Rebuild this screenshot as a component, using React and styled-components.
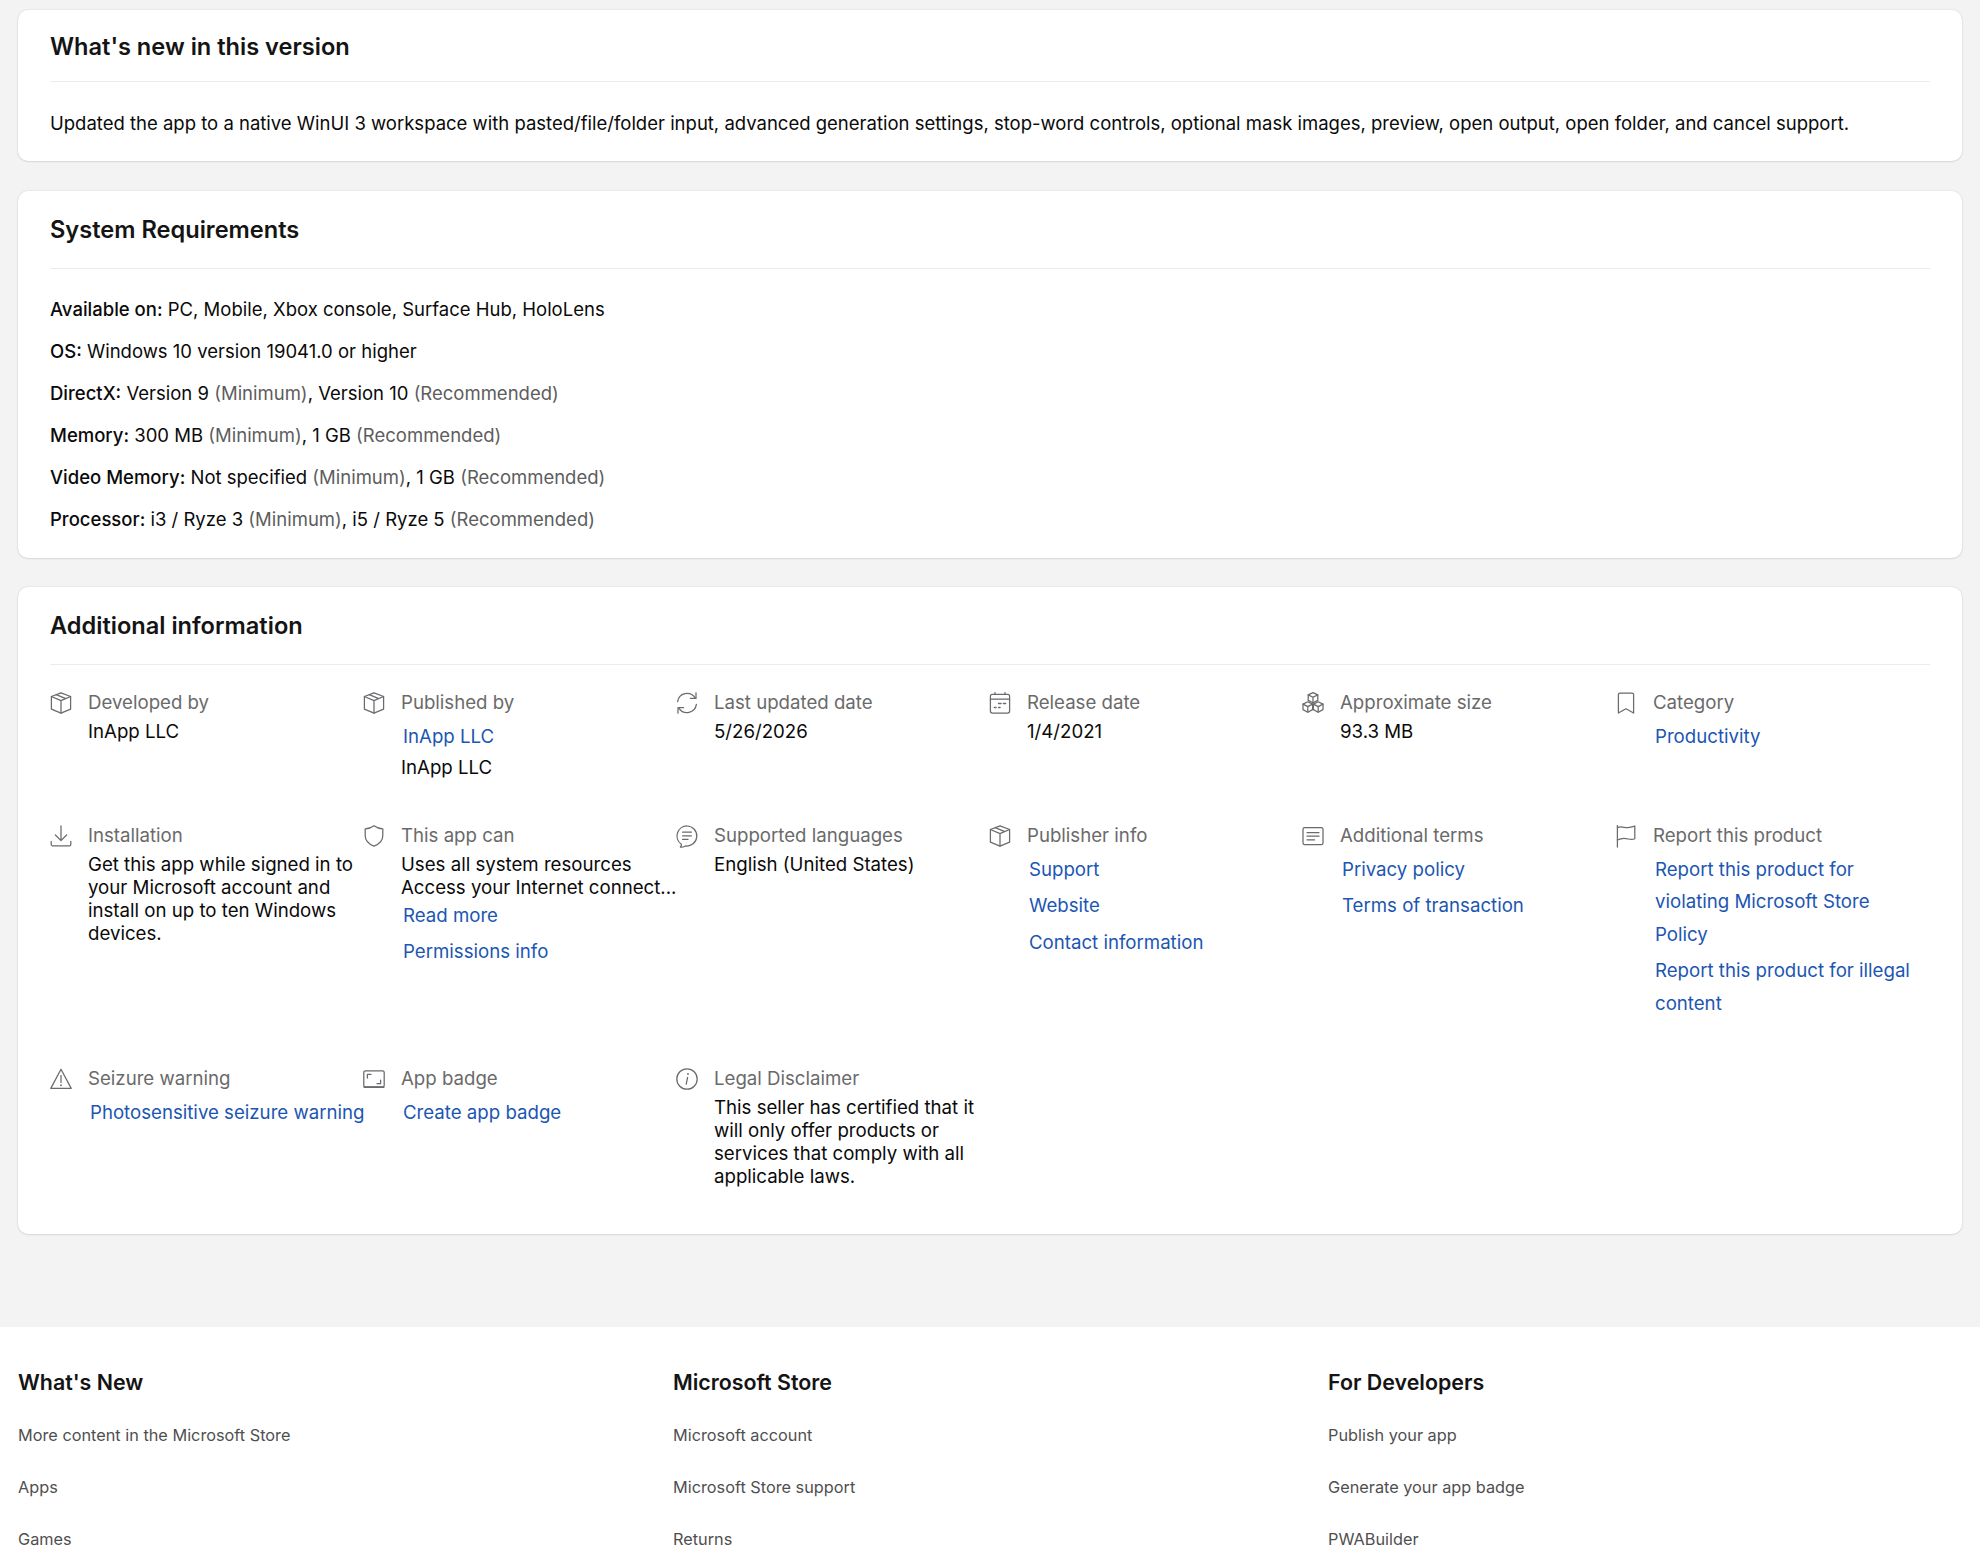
import React from 'react';
import styled, { createGlobalStyle } from 'styled-components';

const GlobalStyle = createGlobalStyle`
  html, body {
    margin: 0;
    padding: 0;
    height: 100%;
    overflow: hidden;
    background: #f3f3f3;
  }
  body {
    font-family: Inter, "Liberation Sans", sans-serif;
    color: #0a0a0a;
  }
`;

const Page = styled.div`
  display: flex;
  flex-direction: column;
  height: 1557px;
  overflow: hidden;
  background: #f3f3f3;
`;

const Main = styled.main`
  display: flex;
  flex-direction: column;
  gap: 29.5px;
  padding: 10px 18px 93px;
`;

const Card = styled.section`
  background: #fff;
  border-radius: 10px;
  padding: 0 32px;
  box-shadow: 0 0 2px rgba(0, 0, 0, 0.14), 0 1px 2px rgba(0, 0, 0, 0.08);
`;

const CardHeader = styled.div`
  display: flex;
  align-items: center;
  box-sizing: border-box;
  height: ${(p) => p.$height}px;
  padding-top: ${(p) => p.$nudge || 0}px;
  border-bottom: 1px solid #ececec;
`;

const Title = styled.h2`
  margin: 0;
  font-size: 23.6px;
  line-height: 32px;
  font-weight: 600;
  color: #141414;
`;

const Notes = styled.p`
  margin: 0;
  padding: 30px 0 26px;
  font-size: 18.5px;
  line-height: 23px;
`;

const ReqList = styled.div`
  padding: 19px 0 18px;
`;

const ReqRow = styled.div`
  font-size: 18.5px;
  line-height: 42px;
`;

const ReqKey = styled.span`
  font-weight: 500;
`;

const Muted = styled.span`
  color: #5d5d5d;
`;

const InfoGrid = styled.div`
  display: grid;
  grid-template-columns: repeat(6, 313px);
  row-gap: 48px;
  padding: 26px 0 45.5px;
`;

const InfoItem = styled.div`
  display: flex;
  align-items: flex-start;
`;

const IconSlot = styled.div`
  flex: none;
  width: 24px;
  height: 24px;
  margin-right: 15px;
  margin-left: -1px;
  color: #6a6a6f;

  svg {
    display: block;
    width: 24px;
    height: 24px;
    fill: none;
    stroke: currentColor;
    stroke-width: 1.25;
    stroke-linejoin: round;
    stroke-linecap: round;
  }
`;

const InfoBody = styled.div`
  flex: 1;
  min-width: 0;
  font-size: 18.65px;
  line-height: 23px;
`;

const Label = styled.div`
  margin-bottom: 6px;
  color: #6a6a6a;
`;

const Links = styled.div`
  display: flex;
  flex-direction: column;
  gap: 4px;
  padding-left: 2px;
  max-width: ${(p) => (p.$narrow ? '262px' : 'none')};
  white-space: ${(p) => (p.$nowrap ? 'nowrap' : 'normal')};
`;

const InfoLink = styled.a`
  color: #1b56b3;
  line-height: 32.5px;
  text-decoration: none;
`;

const AfterLinks = styled.div`
  margin: 3.5px 0 -3.5px;
`;

const ClampLine = styled.div`
  white-space: nowrap;
`;

const TightLink = styled(InfoLink)`
  display: block;
  margin-left: 2px;
`;

const SecondLink = styled(TightLink)`
  margin-top: 3.5px;
`;

const Footer = styled.footer`
  flex: 1;
  display: grid;
  grid-template-columns: repeat(3, 634px);
  column-gap: 21px;
  padding: 41px 18px 0;
  background: #fff;
`;

const FooterTitle = styled.h3`
  margin: 0 0 29px;
  font-size: 21.4px;
  line-height: 28px;
  font-weight: 600;
  color: #141414;
`;

const FooterLink = styled.a`
  display: block;
  font-size: 16.3px;
  line-height: 20px;
  margin-bottom: 32px;
  color: #4f4f4f;
  text-decoration: none;
`;

const BoxIcon = () => (
  <svg viewBox="0 0 24 24">
    <path d="M12 1.8 21.6 5.5V18.2L12 22.2 2.4 18.2V5.5Z" />
    <path d="M2.4 5.5 12 9.6 21.6 5.5M12 9.6V22.2M7.2 3.7 16.8 7.6" />
  </svg>
);

const RefreshIcon = () => (
  <svg viewBox="0 0 24 24">
    <path d="M2.6 10.6A9.6 9.6 0 0 1 20 6.6" />
    <path d="M21 1.8V7.4H15.4" />
    <path d="M21.4 13.4A9.6 9.6 0 0 1 4 17.4" />
    <path d="M3 22.2V16.6H8.6" />
  </svg>
);

const CalendarIcon = () => (
  <svg viewBox="0 0 24 24">
    <rect x="2.4" y="3.4" width="19.2" height="18.6" rx="2" />
    <path d="M2.4 8H21.6M7 1.6V3.4M17 1.6V3.4" />
    <path d="M6.4 16.6H8M10.6 16.6H12M10.6 12.6H13M15.4 12.6H17.6" strokeWidth="1.5" />
  </svg>
);

const CubesIcon = () => (
  <svg viewBox="0 0 24 24">
    <path d="M12 1.6 16.8 3.9V9.4L12 11.7 7.2 9.4V3.9Z" />
    <path d="M7.2 3.9 12 6.2 16.8 3.9M12 6.2V11.7" />
    <path d="M6.8 10.8 11.6 13.1V18.6L6.8 21.2 2 18.6V13.1Z" />
    <path d="M2 13.1 6.8 15.6 11.6 13.1M6.8 15.6V21.2" />
    <path d="M17.2 10.8 22 13.1V18.6L17.2 21.2 12.4 18.6V13.1Z" />
    <path d="M12.4 13.1 17.2 15.6 22 13.1M17.2 15.6V21.2" />
  </svg>
);

const BookmarkIcon = () => (
  <svg viewBox="0 0 24 24">
    <path d="M4.4 3.6A1.6 1.6 0 0 1 6 2H18A1.6 1.6 0 0 1 19.6 3.6V22L12 17.8 4.4 22Z" />
  </svg>
);

const DownloadIcon = () => (
  <svg viewBox="0 0 24 24">
    <path d="M12 1.8V16.6M6.4 11 12 16.6 17.6 11" />
    <path d="M2.2 17.4V20.4A1.4 1.4 0 0 0 3.6 21.8H20.4A1.4 1.4 0 0 0 21.8 20.4V17.4" />
  </svg>
);

const ShieldIcon = () => (
  <svg viewBox="0 0 24 24">
    <path d="M12 1.8C9.4 3.8 6.6 4.8 3.2 4.8V11.6C3.2 16.4 6.2 20 12 22.2 17.8 20 20.8 16.4 20.8 11.6V4.8C17.4 4.8 14.6 3.8 12 1.8Z" />
  </svg>
);

const ChatIcon = () => (
  <svg viewBox="0 0 24 24">
    <path d="M12 2A10 10 0 1 1 10.4 21.9C9 22.9 7.4 23.3 5.4 23.2C6.2 22.2 6.5 21.2 6.4 20.3A10 10 0 0 1 12 2Z" />
    <path d="M7.6 8.2H16.4M7.6 11.8H16.4M7.6 15.4H13" />
  </svg>
);

const TermsIcon = () => (
  <svg viewBox="0 0 24 24">
    <rect x="2" y="3.6" width="20" height="17" rx="1.6" />
    <path d="M6 8.6H18M6 12.2H18M6 15.8H13.6" />
  </svg>
);

const FlagIcon = () => (
  <svg viewBox="0 0 24 24">
    <path d="M3.4 1.6V23" />
    <path d="M3.4 3.6C8.4 1.4 11.4 5 17 3.2C18.2 2.8 19.6 2.4 20.8 2V14.8C16.4 16.8 13.4 13.8 8.4 14.6C6.4 14.9 4.8 15.4 3.4 16" />
  </svg>
);

const WarningIcon = () => (
  <svg viewBox="0 0 24 24">
    <path d="M12 2.2 22.2 21.4H1.8Z" />
    <path d="M12 8.6V15.4" />
    <path d="M12 18.2V18.3" strokeWidth="1.8" />
  </svg>
);

const BadgeIcon = () => (
  <svg viewBox="0 0 24 24">
    <rect x="1.8" y="3.8" width="20.4" height="16.4" rx="1.6" />
    <path d="M5.4 11V7.4H9M18.6 13V16.6H15" />
    <path d="M2.4 20.2H21.6" strokeWidth="1.7" />
  </svg>
);

const InfoIcon = () => (
  <svg viewBox="0 0 24 24">
    <circle cx="12" cy="12" r="10.2" />
    <path d="M12.6 10.4 11.2 17.2" />
    <path d="M13 7V7.1" strokeWidth="1.8" />
  </svg>
);

const Item = ({ icon, label, children }) => (
  <InfoItem>
    <IconSlot>{icon}</IconSlot>
    <InfoBody>
      <Label>{label}</Label>
      {children}
    </InfoBody>
  </InfoItem>
);

const requirements = [
  ['Available on:', 'PC, Mobile, Xbox console, Surface Hub, HoloLens'],
  ['OS:', 'Windows 10 version 19041.0 or higher'],
  ['DirectX:', 'Version 9', 'Version 10'],
  ['Memory:', '300 MB', '1 GB'],
  ['Video Memory:', 'Not specified', '1 GB'],
  ['Processor:', 'i3 / Ryze 3', 'i5 / Ryze 5'],
];

const footerColumns = [
  ["What's New", ['More content in the Microsoft Store', 'Apps', 'Games']],
  ['Microsoft Store', ['Microsoft account', 'Microsoft Store support', 'Returns']],
  ['For Developers', ['Publish your app', 'Generate your app badge', 'PWABuilder']],
];

export default function App() {
  return (
    <Page>
      <GlobalStyle />
      <Main>
        <Card>
          <CardHeader $height={72} $nudge={2}>
            <Title>What's new in this version</Title>
          </CardHeader>
          <Notes>
            Updated the app to a native WinUI 3 workspace with pasted/file/folder input, advanced generation settings, stop-word controls, optional mask images, preview, open output, open folder, and cancel support.
          </Notes>
        </Card>

        <Card>
          <CardHeader $height={78} $nudge={1}>
            <Title>System Requirements</Title>
          </CardHeader>
          <ReqList>
            {requirements.map(([key, min, rec]) => (
              <ReqRow key={key}>
                <ReqKey>{key}</ReqKey> {min}
                {rec && (
                  <>
                    {' '}<Muted>(Minimum)</Muted>, {rec} <Muted>(Recommended)</Muted>
                  </>
                )}
              </ReqRow>
            ))}
          </ReqList>
        </Card>

        <Card>
          <CardHeader $height={78} $nudge={1}>
            <Title>Additional information</Title>
          </CardHeader>
          <InfoGrid>
            <Item icon={<BoxIcon />} label="Developed by">InApp LLC</Item>
            <Item icon={<BoxIcon />} label="Published by">
              <Links>
                <InfoLink href="#">InApp LLC</InfoLink>
              </Links>
              <AfterLinks>InApp LLC</AfterLinks>
            </Item>
            <Item icon={<RefreshIcon />} label="Last updated date">5/26/2026</Item>
            <Item icon={<CalendarIcon />} label="Release date">1/4/2021</Item>
            <Item icon={<CubesIcon />} label="Approximate size">93.3 MB</Item>
            <Item icon={<BookmarkIcon />} label="Category">
              <Links>
                <InfoLink href="#">Productivity</InfoLink>
              </Links>
            </Item>

            <Item icon={<DownloadIcon />} label="Installation">
              Get this app while signed in to your Microsoft account and install on up to ten Windows devices.
            </Item>
            <Item icon={<ShieldIcon />} label="This app can">
              <ClampLine>Uses all system resources</ClampLine>
              <ClampLine>Access your Internet connect...</ClampLine>
              <TightLink href="#">Read more</TightLink>
              <SecondLink href="#">Permissions info</SecondLink>
            </Item>
            <Item icon={<ChatIcon />} label="Supported languages">English (United States)</Item>
            <Item icon={<BoxIcon />} label="Publisher info">
              <Links>
                <InfoLink href="#">Support</InfoLink>
                <InfoLink href="#">Website</InfoLink>
                <InfoLink href="#">Contact information</InfoLink>
              </Links>
            </Item>
            <Item icon={<TermsIcon />} label="Additional terms">
              <Links>
                <InfoLink href="#">Privacy policy</InfoLink>
                <InfoLink href="#">Terms of transaction</InfoLink>
              </Links>
            </Item>
            <Item icon={<FlagIcon />} label="Report this product">
              <Links $narrow>
                <InfoLink href="#">Report this product for violating Microsoft Store Policy</InfoLink>
                <InfoLink href="#">Report this product for illegal content</InfoLink>
              </Links>
            </Item>

            <Item icon={<WarningIcon />} label="Seizure warning">
              <Links $nowrap>
                <InfoLink href="#">Photosensitive seizure warning</InfoLink>
              </Links>
            </Item>
            <Item icon={<BadgeIcon />} label="App badge">
              <Links>
                <InfoLink href="#">Create app badge</InfoLink>
              </Links>
            </Item>
            <Item icon={<InfoIcon />} label="Legal Disclaimer">
              This seller has certified that it will only offer products or services that comply with all applicable laws.
            </Item>
          </InfoGrid>
        </Card>
      </Main>

      <Footer>
        {footerColumns.map(([title, links]) => (
          <div key={title}>
            <FooterTitle>{title}</FooterTitle>
            {links.map((text) => (
              <FooterLink href="#" key={text}>{text}</FooterLink>
            ))}
          </div>
        ))}
      </Footer>
    </Page>
  );
}
